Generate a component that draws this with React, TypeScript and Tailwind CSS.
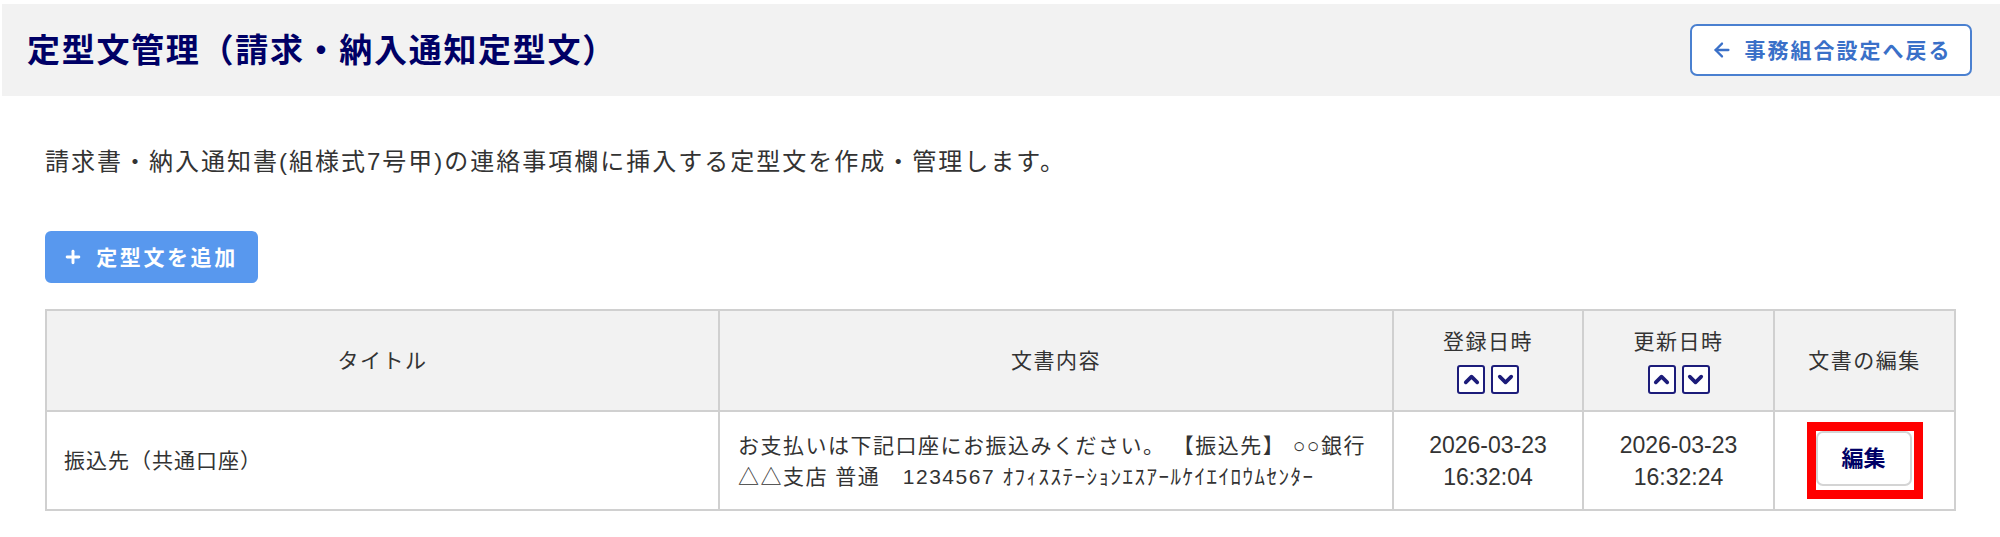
import React from "react";
import { ArrowLeft, Plus, ChevronUp, ChevronDown } from "lucide-react";

function SortButtons() {
  return (
    <div className="flex items-center justify-center gap-[6px] mt-[8px]">
      <button className="w-[28px] h-[29px] border-2 border-[#1c1c7a] rounded-[3px] bg-white flex items-center justify-center text-[#1c1c7a]">
        <ChevronUp size={23} strokeWidth={3.8} />
      </button>
      <button className="w-[28px] h-[29px] border-2 border-[#1c1c7a] rounded-[3px] bg-white flex items-center justify-center text-[#1c1c7a]">
        <ChevronDown size={23} strokeWidth={3.8} />
      </button>
    </div>
  );
}

export default function App() {
  return (
    <div className="min-h-screen bg-white font-['Liberation_Sans','Noto_Sans_CJK_JP',sans-serif] text-[#333333]">
      <header className="ml-[2px] mt-[4px] h-[92px] bg-[#f2f2f2] flex items-center justify-between pl-[25px] pr-[28px]">
        <h1 className="text-[33px] leading-none font-bold text-[#000066] tracking-[1.7px]">
          定型文管理（請求・納入通知定型文）
        </h1>
        <button className="w-[282px] h-[52px] border-2 border-[#4a80d0] rounded-[7px] bg-white text-[#3a70c8] flex items-center justify-center gap-[12px]">
          <ArrowLeft size={22} strokeWidth={2.5} />
          <span className="text-[21px] font-bold tracking-[2px] leading-none">事務組合設定へ戻る</span>
        </button>
      </header>

      <main className="px-[45px]">
        <p className="mt-[48px] text-[24px] leading-[36px] tracking-[2px]">
          請求書・納入通知書(組様式7号甲)の連絡事項欄に挿入する定型文を作成・管理します。
        </p>

        <button className="mt-[51px] w-[213px] h-[52px] bg-[#5898ee] rounded-[6px] text-white flex items-center justify-center gap-[13px] pr-[2px]">
          <Plus size={20} strokeWidth={3.5} />
          <span className="text-[21px] font-bold tracking-[2.6px] leading-none">定型文を追加</span>
        </button>

        <table className="mt-[26px] w-full table-fixed border-collapse border-2 border-[#d0d0d0]">
          <colgroup>
            <col className="w-[673px]" />
            <col className="w-[674px]" />
            <col className="w-[190px]" />
            <col className="w-[191px]" />
            <col className="w-[181px]" />
          </colgroup>
          <thead>
            <tr className="h-[101px] bg-[#f2f2f2] text-[21px] tracking-[1.5px]">
              <th className="border-2 border-[#d0d0d0] font-normal">タイトル</th>
              <th className="border-2 border-[#d0d0d0] font-normal">文書内容</th>
              <th className="border-2 border-[#d0d0d0] font-normal">
                <div className="leading-[30px]">登録日時</div>
                <SortButtons />
              </th>
              <th className="border-2 border-[#d0d0d0] font-normal">
                <div className="leading-[30px]">更新日時</div>
                <SortButtons />
              </th>
              <th className="border-2 border-[#d0d0d0] font-normal">文書の編集</th>
            </tr>
          </thead>
          <tbody>
            <tr className="h-[99px]">
              <td className="border-2 border-[#d0d0d0] pl-[17px] text-[21px] tracking-[1px]">振込先（共通口座）</td>
              <td className="border-2 border-[#d0d0d0] pl-[18px] pr-[8px] text-[21px] leading-[31px] tracking-[1.5px]">
                お支払いは下記口座にお振込みください。 【振込先】 ○○銀行 △△支店 普通　1234567 ｵﾌｨｽｽﾃｰｼｮﾝｴｽｱｰﾙｹｲｴｲﾛｳﾑｾﾝﾀｰ
              </td>
              <td className="border-2 border-[#d0d0d0] text-center text-[23px] leading-[32px]">
                2026-03-23
                <br />
                16:32:04
              </td>
              <td className="border-2 border-[#d0d0d0] text-center text-[23px] leading-[32px]">
                2026-03-23
                <br />
                16:32:24
              </td>
              <td className="border-2 border-[#d0d0d0]">
                <div className="flex justify-center">
                  <div className="border-[9px] border-[#ff0000] w-[116px] h-[77px] flex items-start justify-start">
                    <button className="w-[96px] h-[55px] border-2 border-[#d4d4d4] rounded-[7px] bg-white text-[#000066] text-[22px] font-bold leading-none">
                      編集
                    </button>
                  </div>
                </div>
              </td>
            </tr>
          </tbody>
        </table>
      </main>
    </div>
  );
}
